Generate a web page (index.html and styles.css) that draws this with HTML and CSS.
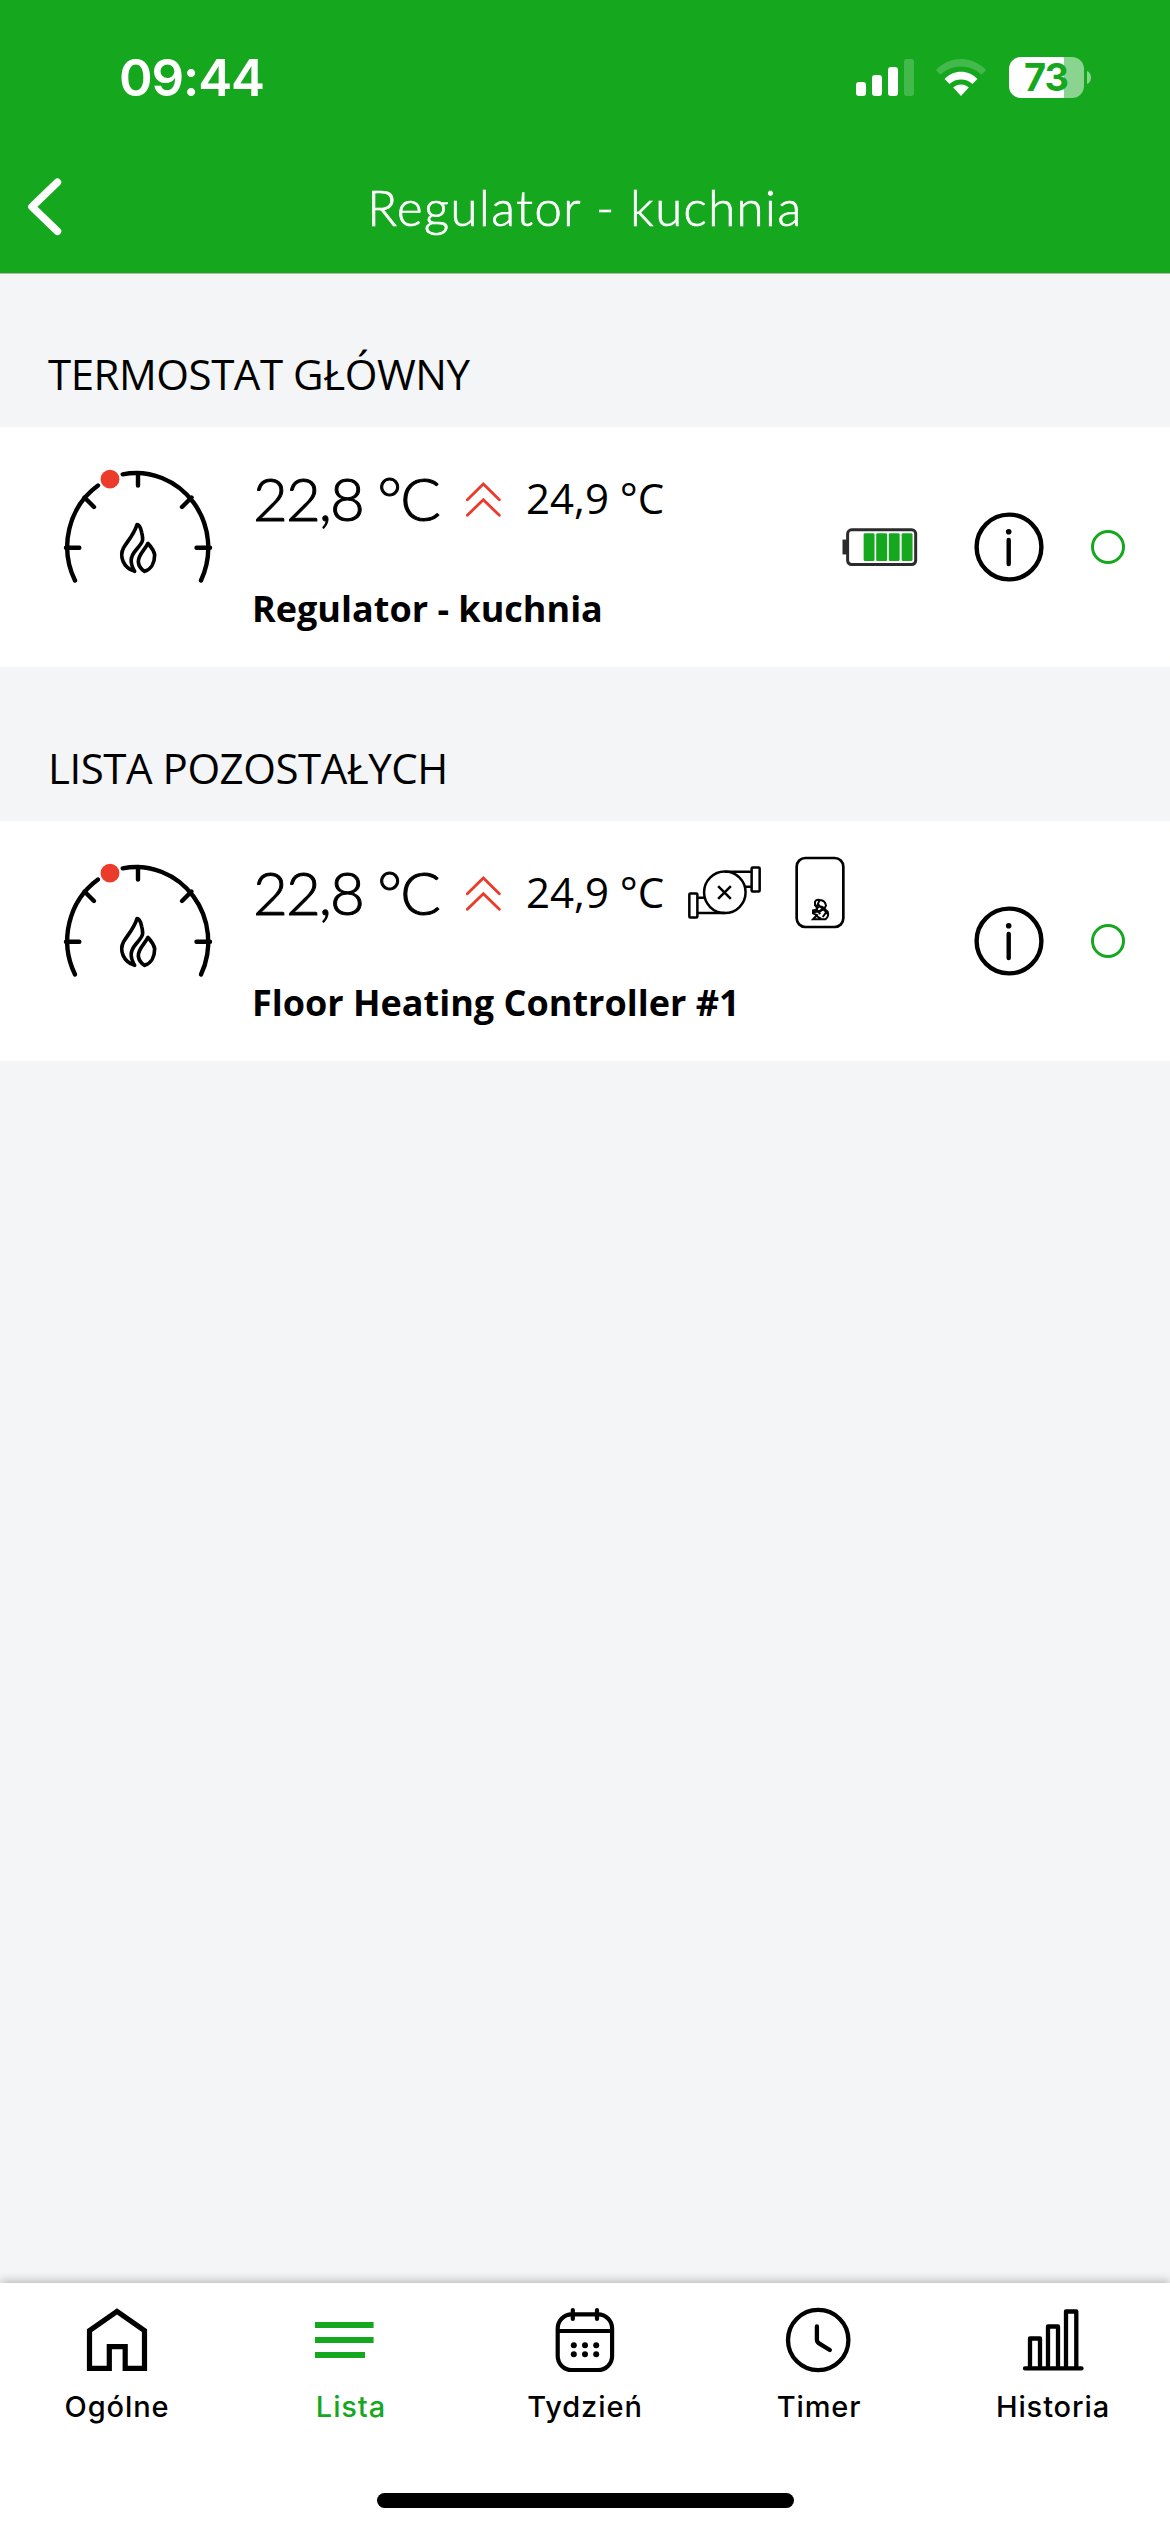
FILE: index.html
```html
<!DOCTYPE html>
<html lang="pl">
<head>
<meta charset="utf-8">
<title>Regulator - kuchnia</title>
<link rel="stylesheet" href="styles.css">
</head>
<body>
<svg class="defs" width="0" height="0" aria-hidden="true">
  <symbol id="gauge" viewBox="60 467 156 122">
    <g fill="none" stroke="#000" stroke-width="4.4" stroke-linecap="round" stroke-linejoin="round">
      <path d="M75 580.5A72.2 74.8 0 0 1 98 485.500M122.7 474.3A72.2 74.8 0 0 1 201 580.5"/>
      <path d="M138 473v12.5M66 547.7h13.3M196.5 547.7H210M84.5 497.5l9.5 9.5M191.5 497.5L182 507"/>
      <path stroke-width="11" transform="translate(30 440) scale(.3333)" d="M321 254C313 281 294 302 281 323C267 349 280 384 314 394C298 367 301 350 318 330C340 305 341 301 335 277Q330 254 321 254ZM354 310C345 330 324 344 325 366Q327 384 344 394C364 388 374 367 374 344C371 328 364 322 354 310Z"/>
    </g>
    <circle cx="110" cy="479.2" r="9.4" fill="#eb3b2a"/>
  </symbol>
  <symbol id="rise" viewBox="110 122 105 105">
    <path d="M114 175L162 128L210 175M114 222L162 175L210 222" fill="none" stroke="#eb3b2a" stroke-width="8.500" stroke-linecap="round"/>
  </symbol>
  <symbol id="info" viewBox="0 0 70 70">
    <circle cx="35" cy="35" r="32.4" fill="none" stroke="#000" stroke-width="4.4"/>
    <circle cx="34.7" cy="19.7" r="2.8"/>
    <path d="M34.7 28v24" stroke="#000" stroke-width="4.4" stroke-linecap="round"/>
  </symbol>
</svg>

<div class="screen">
  <header class="header">
    <div class="status">
      <span class="time">09:44</span>
      <div class="status-icons">
        <svg class="signal" viewBox="0 0 58 37" fill="#fff">
          <rect y="23" width="10" height="14" rx="3"/>
          <rect x="16" y="16" width="10" height="21" rx="3"/>
          <rect x="32" y="8" width="10" height="29" rx="3"/>
          <rect x="48" width="10" height="37" rx="3" opacity=".2"/>
        </svg>
        <svg class="wifi" viewBox="409 117 151 111" fill="#fff">
          <path opacity=".2" d="M409 150C451 106 518 106 560 150L546 164C512 131 457 131 423 164Z"/>
          <path d="M435 177C463 148 506 148 534 177L519 192C500 174 469 174 450 192Z"/>
          <path d="M461 203C474 191 495 191 508 203L484.500 228Z"/>
        </svg>
        <div class="battery"><span class="battery-level">73</span></div>
        <svg class="nub" viewBox="0 0 4 13"><path d="M0 0C5.300 2 5.300 11 0 13Z" fill="#fff" opacity=".5"/></svg>
      </div>
    </div>
    <div class="nav">
      <svg class="back" viewBox="0 0 34 58"><path d="M29.400 4.300L4 28.800L29.400 53.300" fill="none" stroke="#fff" stroke-width="7.600" stroke-linecap="round" stroke-linejoin="round"/></svg>
      <h1 class="title">Regulator - kuchnia</h1>
    </div>
  </header>

  <main class="content">
    <h2 class="section">TERMOSTAT GŁÓWNY</h2>
    <article class="device">
      <svg class="gauge"><use href="#gauge"/></svg>
      <div class="details">
        <div class="temps">
          <span class="current">22,8 °C</span>
          <svg class="rise"><use href="#rise"/></svg>
          <span class="target">24,9 °C</span>
        </div>
        <div class="name">Regulator - kuchnia</div>
      </div>
      <div class="actions">
        <svg class="cell" viewBox="94 143 227 115">
          <rect x="94" y="178" width="14" height="45" fill="#2b2b2b"/>
          <rect x="109.500" y="148.500" width="206" height="105" rx="12" fill="#fff" stroke="#2b2b2b" stroke-width="9"/>
          <g fill="#15a81f"><rect x="158" y="159" width="33" height="84" rx="4"/><rect x="196" y="159" width="33" height="84" rx="4"/><rect x="234" y="159" width="33" height="84" rx="4"/><rect x="273" y="159" width="33" height="84" rx="4"/></g>
        </svg>
        <svg class="info"><use href="#info"/></svg>
        <span class="ring"></span>
      </div>
    </article>

    <h2 class="section">LISTA POZOSTAŁYCH</h2>
    <article class="device">
      <svg class="gauge"><use href="#gauge"/></svg>
      <div class="details">
        <div class="temps">
          <span class="current">22,8 °C</span>
          <svg class="rise"><use href="#rise"/></svg>
          <span class="target">24,9 °C</span>
          <svg class="pump" viewBox="143 107 218 158" fill="none" stroke="#000" stroke-width="7.500">
            <rect x="147" y="189" width="24" height="72" rx="3"/>
            <rect x="333" y="111" width="24" height="72" rx="3"/>
            <circle cx="253" cy="185.500" r="62"/>
            <path d="M253 124h80M311 169h22M171 202h23M171 247h82M233 167l38 38M271 167l-38 38"/>
          </svg>
          <svg class="boiler" viewBox="465 77 150 217" fill="none" stroke="#000" stroke-width="8">
            <rect x="470" y="82" width="140" height="207" rx="26"/>
            <path stroke-width="6" d="M525 227V213Q529 206 540 208Q555 209 558 225L551 237L535 222M538 210L532 224L525 227M529 236Q538 222 550 231Q563 239 560 251M529 226L531 237L519 239V248L531 253L519 266H556Q568 258 563 243L553 236L534 242L541 250M538 242Q552 229 558 246L548 259M529 256L543 264M521 245L545 240"/>
          </svg>
        </div>
        <div class="name">Floor Heating Controller #1</div>
      </div>
      <div class="actions">
        <svg class="info"><use href="#info"/></svg>
        <span class="ring"></span>
      </div>
    </article>
  </main>

  <footer class="footer">
    <nav class="tabs">
      <a class="tab"><svg class="tab-icon" viewBox="83 2306 68 68" fill="none" stroke="#000" stroke-width="5.200"><path d="M89.500 2368.400V2330.500L117 2311.300L144.500 2330.500V2368.400H125.200V2346.600H109.300V2368.400Z"/></svg><span>Ogólne</span></a>
      <a class="tab active"><svg class="tab-icon" viewBox="317 2306 68 68" fill="#15a81f"><path d="M315 2322h58.600v6H315zM315 2337h58.600v6H315zM315 2352h50v6h-50z"/></svg><span>Lista</span></a>
      <a class="tab"><svg class="tab-icon" viewBox="551 2306 68 68" fill="none" stroke="#000" stroke-width="4.200" stroke-linecap="round"><rect x="557.700" y="2314.400" width="54.400" height="55.600" rx="14"/><path d="M558 2331h54M572.800 2310v9M597 2310v9"/><g fill="#000" stroke="none"><circle cx="573.800" cy="2345.300" r="3"/><circle cx="585" cy="2345.300" r="3"/><circle cx="596.200" cy="2345.300" r="3"/><circle cx="573.800" cy="2354.200" r="3"/><circle cx="585" cy="2354.200" r="3"/><circle cx="596.200" cy="2354.200" r="3"/></g></svg><span>Tydzień</span></a>
      <a class="tab"><svg class="tab-icon" viewBox="785 2306 68 68" fill="none" stroke="#000" stroke-width="4.300" stroke-linecap="round"><circle cx="818.200" cy="2340" r="30.200"/><path d="M816.900 2326.500V2339.500Q816.900 2342 819 2343.300L829.800 2350"/></svg><span>Timer</span></a>
      <a class="tab"><svg class="tab-icon" viewBox="1019 2306 68 68" fill="none" stroke="#000" stroke-width="4.300" stroke-linecap="round" stroke-linejoin="round"><path d="M1025 2368.400H1081.500M1030 2368V2338.500H1040V2368M1048 2368V2326.500H1058V2368M1066 2368V2311.500H1076.300V2368"/></svg><span>Historia</span></a>
    </nav>
    <div class="home-bar"></div>
  </footer>
</div>
</body>
</html>
```
FILE: styles.css
```css
* { box-sizing: border-box; }
body { margin: 0; background: #f4f5f7; color: #000; font-family: "Open Sans", "Noto Sans", sans-serif; }
svg { display: block; flex: none; }
.defs { position: absolute; }
.screen { width: 1170px; height: 2532px; display: flex; flex-direction: column; overflow: hidden; }

.header { height: 274px; background: #15a81f; border-bottom: 1px solid #b1b8b2; color: #fff; flex: none; }
.status { height: 141px; padding: 14px 79px 0 119px; display: flex; align-items: center; justify-content: space-between; }
.time { font: 600 51px/60px Inter, sans-serif; letter-spacing: -1.1px; }
.status-icons { display: flex; align-items: center; }
.signal { width: 58px; height: 37px; }
.wifi { width: 50px; height: 37px; margin-left: 22px; overflow: visible; }
.battery { width: 75px; height: 41px; margin-left: 23px; border-radius: 12px; background: linear-gradient(90deg, #fff 55px, #8ad48f 55px); color: #15a81f; display: flex; justify-content: center; }
.battery-level { font: 700 38px/41px Inter, sans-serif; letter-spacing: -1px; margin-right: 1px; }
.nub { width: 4px; height: 13px; margin-left: 3px; }
.nav { height: 132px; display: grid; grid-template-columns: 100px 1fr 100px; align-items: center; }
.back { width: 34px; height: 58px; margin-left: 28px; }
.title { margin: 0; text-align: center; font: 300 49px/60px Lato, sans-serif; letter-spacing: 1.5px; white-space: nowrap; -webkit-text-stroke: .7px #fff; }

.content { flex: 1; }
.section { margin: 0; height: 153px; padding: 71px 48px 0; font-size: 42px; line-height: 58px; font-weight: 400; letter-spacing: -.45px; white-space: nowrap; }
.section ~ .section { height: 154px; padding-top: 72px; }
.device { height: 240px; background: #fff; padding: 38px 45px 0 60px; display: flex; }
.gauge { width: 156px; height: 122px; margin-top: 2px; }
.details { margin-left: 36px; flex: 1; }
.temps { height: 66px; display: flex; align-items: center; white-space: nowrap; }
.current { width: 214px; padding-left: 1px; font: 300 60px/66px Lato, sans-serif; letter-spacing: -1.9px; -webkit-text-stroke: 1px #000; }
.rise { width: 35px; height: 35px; margin-top: 3px; }
.target { width: 163px; padding-left: 25px; font-size: 42px; line-height: 66px; }
.pump { width: 73px; height: 53px; margin-left: 24px; }
.boiler { width: 50px; height: 73px; margin-left: 34px; }
.name { margin-top: 53px; font-size: 36px; line-height: 50px; font-weight: 700; white-space: nowrap; }
.actions { height: 160px; margin-top: 2px; display: flex; align-items: center; }
.cell { width: 76px; height: 38px; margin-right: 56px; }
.info { width: 70px; height: 70px; }
.ring { width: 34px; height: 34px; margin-left: 47px; border: 3px solid #15a81f; border-radius: 50%; }

.footer { height: 249px; background: #fff; box-shadow: 0 -1px 10px rgba(0, 0, 0, .3); display: flex; flex-direction: column; align-items: center; flex: none; }
.tabs { width: 100%; height: 210px; display: grid; grid-template-columns: repeat(5, 1fr); }
.tab { padding-top: 23px; display: flex; flex-direction: column; align-items: center; font: 500 29px/36px Inter, sans-serif; letter-spacing: .9px; }
.tab-icon { width: 68px; height: 68px; overflow: visible; margin-bottom: 15px; }
.active { color: #15a81f; }
.home-bar { width: 417px; height: 15px; border-radius: 8px; background: #000; }
```
